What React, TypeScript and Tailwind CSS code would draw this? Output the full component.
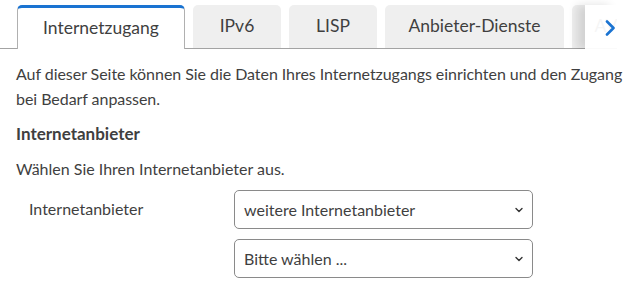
const tabs = [
  { label: 'Internetzugang', w: 'w-[168px]', active: true },
  { label: 'IPv6', w: 'w-[88px]' },
  { label: 'LISP', w: 'w-[88px]' },
  { label: 'Anbieter-Dienste', w: 'w-[179px]' },
  { label: 'AVM-Dienste', w: 'w-[150px]' },
];

function Chevron() {
  return (
    <svg width="10" height="16" viewBox="0 0 10 16" fill="none">
      <path d="M2 1.5 L8.5 8 L2 14.5" stroke="#1a73d1" strokeWidth="2.6" strokeLinecap="round" strokeLinejoin="round" />
    </svg>
  );
}

function Select({ value }: { value: string }) {
  return (
    <div className="flex h-[39px] w-[299px] items-center justify-between rounded-[5px] border border-[#8a8a8a] bg-white pl-[9px] pr-[9px]">
      <span className="text-[16px] text-[#3f3f3f]">{value}</span>
      <svg width="8" height="6" viewBox="0 0 8 6" fill="none">
        <path d="M1 1.5 L4 4.5 L7 1.5" stroke="#333" strokeWidth="1.4" strokeLinecap="round" strokeLinejoin="round" />
      </svg>
    </div>
  );
}

export default function App() {
  return (
    <div className="min-h-[301px] w-[633px] bg-white text-[#3f3f3f]" style={{ fontFamily: 'Lato, "Noto Sans", sans-serif' }}>
      {/* tab strip */}
      <div className="relative mr-4 overflow-hidden pt-[5px]">
        <div className="flex items-end gap-2 border-b border-[#a3a3a3] pl-[17px]">
          {tabs.map((t) =>
            t.active ? (
              <div
                key={t.label}
                className={`${t.w} -mb-px flex h-[44px] shrink-0 items-center justify-center rounded-t-[5px] border-x border-t-[3px] border-x-[#b0b0b0] border-t-[#1a73d1] bg-white text-[17.5px]`}
              >
                {t.label}
              </div>
            ) : (
              <div
                key={t.label}
                className={`${t.w} flex h-[43px] shrink-0 items-center justify-center rounded-t-[5px] bg-[#efefef] text-[17.5px]`}
              >
                {t.label}
              </div>
            )
          )}
        </div>
        {/* scroll arrow over the strip */}
        <div className="absolute bottom-[-1px] left-[585px] top-[5px] flex w-[32px] items-center pl-[20px] bg-white/95 shadow-[-8px_0_10px_rgba(0,0,0,0.12)]">
          <Chevron />
        </div>
      </div>

      <div className="pl-4">
        <p className="mt-[12px] text-[16px] leading-[25px] tracking-[-0.05px]">
          Auf dieser Seite können Sie die Daten Ihres Internetzugangs einrichten und den Zugang bei Bedarf anpassen.
        </p>
        <h2 className="mt-[10px] text-[17px] font-bold leading-[25px]">Internetanbieter</h2>
        <p className="mt-[10px] text-[16px] leading-[25px]">Wählen Sie Ihren Internetanbieter aus.</p>

        <div className="mt-[9px] flex items-start">
          <div className="w-[218px] pl-[13px] pt-[8px] text-[16px] leading-[22px]">Internetanbieter</div>
          <div className="flex flex-col gap-[10px]">
            <Select value="weitere Internetanbieter" />
            <Select value="Bitte wählen ..." />
          </div>
        </div>
      </div>
    </div>
  );
}
